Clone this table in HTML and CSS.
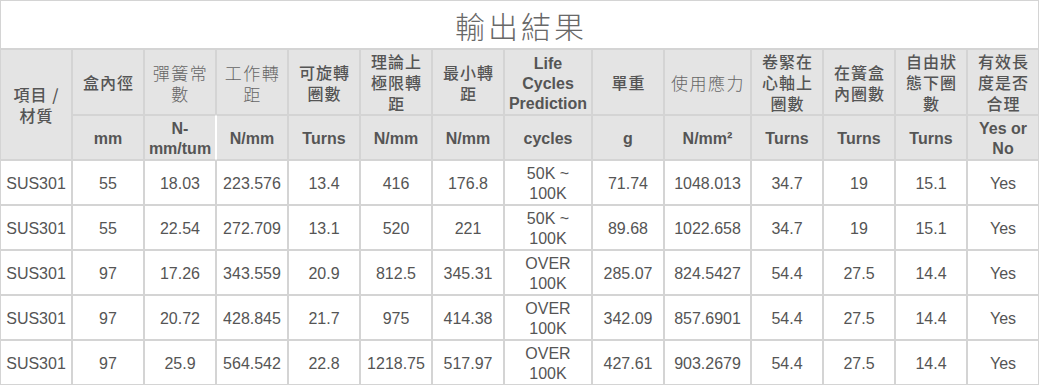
FILE: index.html
```html
<!DOCTYPE html>
<html lang="zh-Hant">
<head>
<meta charset="utf-8">
<title>輸出結果</title>
<link rel="stylesheet" href="styles.css">
</head>
<body>
<table class="result">
  <colgroup>
    <col class="c72"><col class="c72"><col class="c72"><col class="c72"><col class="c72"><col class="c72"><col class="c72">
    <col class="c88"><col class="c72"><col class="c87"><col class="c72"><col class="c72"><col class="c72"><col class="c72">
  </colgroup>
  <thead>
    <tr class="row-title"><th colspan="14" class="title">輸出結果</th></tr>
    <tr class="row-head">
      <th rowspan="2" class="zh">項目 /<br>材質</th>
      <th class="zh">盒內徑</th>
      <th class="zh thin">彈簧常<br>數</th>
      <th class="zh thin">工作轉<br>距</th>
      <th class="zh">可旋轉<br>圈數</th>
      <th class="zh">理論上<br>極限轉<br>距</th>
      <th class="zh">最小轉<br>距</th>
      <th class="en">Life<br>Cycles<br>Prediction</th>
      <th class="zh">單重</th>
      <th class="zh thin">使用應力</th>
      <th class="zh">卷緊在<br>心軸上<br>圈數</th>
      <th class="zh">在簧盒<br>內圈數</th>
      <th class="zh">自由狀<br>態下圈<br>數</th>
      <th class="zh">有效長<br>度是否<br>合理</th>
    </tr>
    <tr class="row-unit">
      <th class="en">mm</th>
      <th class="en gap-r">N-<br>mm/tum</th>
      <th class="en gap-l">N/mm</th>
      <th class="en">Turns</th>
      <th class="en">N/mm</th>
      <th class="en">N/mm</th>
      <th class="en">cycles</th>
      <th class="en">g</th>
      <th class="en">N/mm²</th>
      <th class="en">Turns</th>
      <th class="en">Turns</th>
      <th class="en">Turns</th>
      <th class="en">Yes or<br>No</th>
    </tr>
  </thead>
  <tbody>
    <tr>
      <td>SUS301</td><td>55</td><td>18.03</td><td>223.576</td><td>13.4</td><td>416</td><td>176.8</td>
      <td>50K ~ 100K</td><td>71.74</td><td>1048.013</td><td>34.7</td><td>19</td><td>15.1</td><td>Yes</td>
    </tr>
    <tr>
      <td>SUS301</td><td>55</td><td>22.54</td><td>272.709</td><td>13.1</td><td>520</td><td>221</td>
      <td>50K ~ 100K</td><td>89.68</td><td>1022.658</td><td>34.7</td><td>19</td><td>15.1</td><td>Yes</td>
    </tr>
    <tr>
      <td>SUS301</td><td>97</td><td>17.26</td><td>343.559</td><td>20.9</td><td>812.5</td><td>345.31</td>
      <td>OVER 100K</td><td>285.07</td><td>824.5427</td><td>54.4</td><td>27.5</td><td>14.4</td><td>Yes</td>
    </tr>
    <tr>
      <td>SUS301</td><td>97</td><td>20.72</td><td>428.845</td><td>21.7</td><td>975</td><td>414.38</td>
      <td>OVER 100K</td><td>342.09</td><td>857.6901</td><td>54.4</td><td>27.5</td><td>14.4</td><td>Yes</td>
    </tr>
    <tr>
      <td>SUS301</td><td>97</td><td>25.9</td><td>564.542</td><td>22.8</td><td>1218.75</td><td>517.97</td>
      <td>OVER 100K</td><td>427.61</td><td>903.2679</td><td>54.4</td><td>27.5</td><td>14.4</td><td>Yes</td>
    </tr>
  </tbody>
</table>
</body>
</html>
```

FILE: styles.css
```css
html, body {
  margin: 0;
  padding: 0;
  background: #ffffff;
}

.result {
  width: 1039px;
  table-layout: fixed;
  border-collapse: separate;
  border-spacing: 0;
  font-family: "Liberation Sans", Arial, "Noto Sans CJK TC", sans-serif;
  font-size: 16px;
  color: #555555;
}

.c72 { width: 72px; }
.c88 { width: 88px; }
.c87 { width: 87px; }

.result th,
.result td {
  border: 1px solid #d4d4d4;
  padding: 3px 2px 0;
  line-height: 20px;
  text-align: center;
  vertical-align: middle;
  overflow: hidden;
}

.row-title { height: 49px; }
.row-head { height: 66px; }
.row-unit { height: 45px; }
.result tbody tr { height: 45px; }

.result th.title {
  background: #ffffff;
  padding: 0 0 0 3px;
  font-family: "Noto Sans CJK TC", sans-serif;
  font-size: 30px;
  font-weight: 300;
  letter-spacing: 3px;
  line-height: 36px;
  color: #686868;
}

.row-head th,
.row-unit th {
  background: #e4e4e4;
}

.result th.zh {
  font-family: "Noto Sans CJK TC", sans-serif;
  font-weight: 500;
  letter-spacing: 1px;
  padding: 1px 2px 0 3px;
  line-height: 21px;
  color: #555555;
}

.result th.thin {
  font-size: 17px;
  font-weight: 300;
  letter-spacing: 1.5px;
  color: #666666;
}

.result th.en {
  font-family: "Liberation Sans", Arial, sans-serif;
  font-weight: 700;
  color: #555555;
}

.result th.gap-r { border-right-color: #ffffff; }
.result th.gap-l { border-left-color: #ffffff; }

.result td {
  background: #ffffff;
  color: #555555;
}
```
